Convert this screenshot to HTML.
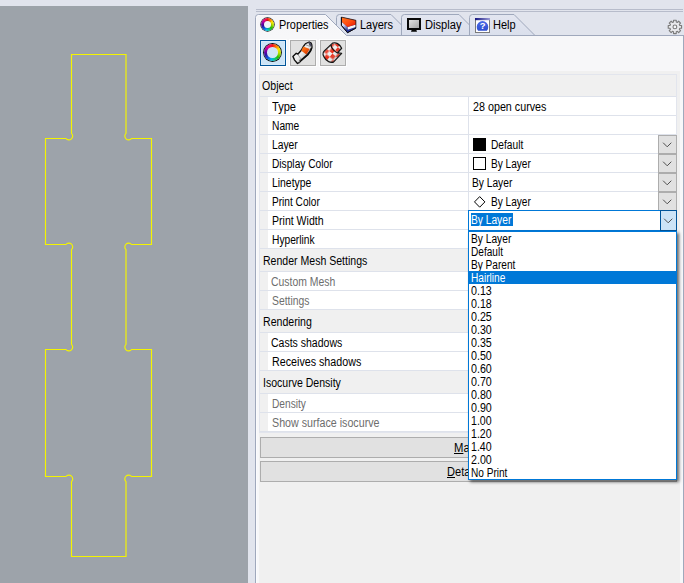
<!DOCTYPE html>
<html lang="en">
<head>
<meta charset="utf-8">
<title>Properties</title>
<style>
html,body{margin:0;padding:0}
body{width:684px;height:583px;overflow:hidden;position:relative;background:#E1E4ED;font-family:'Liberation Sans', sans-serif;font-size:11px}
.abs,.t,.hd,.rw,.ln,.hl,.sw,.cb,.btn{position:absolute}
.t{white-space:nowrap;transform-origin:0 0;display:block}
#view{left:0;top:6px;width:248px;height:577px;background:#9DA3AA}
#content{left:256px;top:36px;width:427px;height:547px;background:#F7F7F9}
#lborder{left:255px;top:36px;width:1px;height:547px;background:#9FA8BC}
#lwhite{left:256px;top:36px;width:1px;height:547px;background:#fbfbfd}
#rborder{left:683px;top:36px;width:1px;height:547px;background:#9FA8BC}
#inner{left:259px;top:71px;width:421px;height:512px;background:#F0F0F0}
#grid{left:259px;top:74px;width:416px;height:357px;border:1px solid #E2E5ED;background:#F0F0F0}
.hd{left:260px;width:416px;background:#F0F0F0}
.rw{left:268px;width:408px;background:#fff}
.ln{left:260px;width:416px;height:1px;background:#DEE2EB}
#vdiv{left:468px;width:1px;background:#DEE2EB}
.tb{position:absolute;top:40px;width:24px;height:24px;border:1px solid #ADADAD;background:#E1E1E1;box-shadow:0 0 0 1px rgba(255,255,255,.75)}
.tb.on{border-color:#005499;background:#CCE4F7;box-shadow:0 0 0 1px rgba(255,255,255,.75),inset 0 0 0 1px rgba(255,255,255,.2)}
.cb{left:658px;width:17px;height:17px;border:1px solid #ADADAD;background:#E1E1E1}
.btn{left:260px;width:415px;height:19px;border:1px solid #ADADAD;background:#E1E1E1}
#dd{left:468px;top:231px;width:207px;height:247px;border:1px solid #0078D7;background:#fff;box-shadow:2px 2px 3px rgba(0,0,0,.58)}
.hl{left:469px;width:207px;height:13px;background:#0078D7}
#combo{left:468px;top:210px;width:207px;height:19px;border:1px solid #0078D7;background:#fff}
#combobtn{left:660px;top:210px;width:15px;height:19px;border:1px solid #005499;background:#CCE4F7}
#sel{left:471px;top:213px;width:42px;height:13px;background:#0078D7}
u{text-decoration:underline}
</style>
</head>
<body>

<!-- viewport -->
<div id="view" class="abs"></div>
<svg class="abs" style="left:0;top:0" width="248" height="583" viewBox="0 0 248 583">
  <path d="M126.0,54.5 L71.5,54.5 L71.50,133.33 A3.8,3.8 0 1 1 65.95,138.50 L45.5,138.5 L45.5,244.5 L65.95,244.50 A3.8,3.8 0 1 1 71.50,249.67 L71.50,344.33 A3.8,3.8 0 1 1 65.95,349.50 L45.5,349.5 L45.5,476.5 L65.95,476.50 A3.8,3.8 0 1 1 71.50,481.67 L71.5,556.5 L126.0,556.5 L126.00,481.67 A3.8,3.8 0 1 1 131.55,476.50 L151.5,476.5 L151.5,349.5 L131.55,349.50 A3.8,3.8 0 1 1 126.00,344.33 L126.00,249.67 A3.8,3.8 0 1 1 131.55,244.50 L151.5,244.5 L151.5,138.5 L131.55,138.50 A3.8,3.8 0 1 1 126.00,133.33 Z" fill="none" stroke="#F4F400" stroke-width="1.15"/>
</svg>

<!-- panel chrome -->
<div class="abs" style="left:256px;top:9px;width:427px;height:1px;background:#B7BCCB"></div>
<div class="abs" style="left:256px;top:11px;width:427px;height:1px;background:#B7BCCB"></div>
<div id="content" class="abs"></div>
<div id="lborder" class="abs"></div><div id="lwhite" class="abs"></div><div id="rborder" class="abs"></div>

<svg class="abs" style="left:0;top:0" width="684" height="40" viewBox="0 0 684 40">
  <defs>
    <linearGradient id="gi" x1="0" y1="0" x2="0" y2="1"><stop offset="0" stop-color="#E3E6F0"/><stop offset="1" stop-color="#DADFEC"/></linearGradient>
    <linearGradient id="ga" x1="0" y1="0" x2="0" y2="1"><stop offset="0" stop-color="#F5F5F8"/><stop offset="1" stop-color="#F7F7F9"/></linearGradient>
  </defs>
  <path d="M336.5,36.0 L336.5,17.5 Q336.5,14.5 339.5,14.5 L391,14.5 L412.0,35.5" fill="url(#gi)" stroke="#9FA8BC"/>
  <path d="M401.5,36.0 L401.5,17.5 Q401.5,14.5 404.5,14.5 L459,14.5 L480.0,35.5" fill="url(#gi)" stroke="#9FA8BC"/>
  <path d="M469.5,36.0 L469.5,17.5 Q469.5,14.5 472.5,14.5 L514,14.5 L535.0,35.5" fill="url(#gi)" stroke="#9FA8BC"/>
  <path d="M256,35.5 L684,35.5" stroke="#9FA8BC"/>
  <path d="M255.5,36.0 L255.5,17.5 Q255.5,14.5 258.5,14.5 L325.5,14.5 L346.5,35.5 L346.5,36.0" fill="url(#ga)" stroke="none"/>
  <path d="M255.5,36.0 L255.5,17.5 Q255.5,14.5 258.5,14.5 L325.5,14.5 L346.5,35.5" fill="none" stroke="#9FA8BC"/>
  <path d="M256.5,36 L256.5,17.5 Q256.5,15.5 258.5,15.5 L325,15.5 L345,35.5" fill="none" stroke="#fff" stroke-opacity=".45"/>
</svg>

<!-- tab icons -->
<div class="abs" style="left:261px;top:17.9px;width:13.2px;height:13.2px;border-radius:50%;background:conic-gradient(from 0deg,#f01818 0deg,#ff7000 28deg,#ffe800 62deg,#b4e000 95deg,#28c000 130deg,#00c890 165deg,#00b8e8 190deg,#1050e0 222deg,#3010a0 252deg,#8000a8 282deg,#e80090 320deg,#f01040 345deg,#f01818 360deg);box-shadow:0 0 0 .7px #1a1a1a"></div>
<div class="abs" style="left:264.1px;top:21px;width:7px;height:7px;border-radius:50%;background:radial-gradient(#f2f3f8 55%,#fff 100%);box-shadow:0 0 0 .4px rgba(0,0,0,.35)"></div>
<span class="t" style="left:278.84px;top:18.00px;font-size:12px;line-height:14px;color:#000;transform:scaleX(0.9062)">Properties</span>

<svg class="abs" style="left:340px;top:16px" width="17" height="18" viewBox="339.7 16 17 18">
  <defs>
    <linearGradient id="lo" x1="0" y1="0" x2="1" y2="1"><stop offset="0" stop-color="#FF7A1E"/><stop offset=".55" stop-color="#FF4A10"/><stop offset="1" stop-color="#DE1408"/></linearGradient>
    <linearGradient id="lf" x1="0" y1="0" x2="0.35" y2="1"><stop offset="0" stop-color="#FFFFFF"/><stop offset=".45" stop-color="#C9CFF0"/><stop offset="1" stop-color="#1E2C8E"/></linearGradient>
  </defs>
  <polygon points="341.1,17.1 355.6,20.3 355.6,28.1 347.2,32.7 341.1,25.4" fill="#24349A"/>
  <polygon points="347.2,26.9 355.6,24.4 355.6,26.9 347.2,29.7" fill="#F4F4F6"/>
  <polygon points="341.1,21.4 347.2,26.9 347.2,32.7 341.1,25.4" fill="url(#lf)"/>
  <polygon points="341.1,17.1 355.6,20.3 355.6,24.6 347.2,26.9 341.1,21.4" fill="url(#lo)"/>
  <polygon points="341.1,17.1 355.6,20.3 355.6,28.1 347.2,32.7 341.1,25.4" fill="none" stroke="#111" stroke-width=".7" stroke-linejoin="round"/>
  <path d="M341.1,17.1 L341.1,25.4 L347.2,32.7 L355.6,28.1" fill="none" stroke="#0a0a14" stroke-width="1" stroke-linejoin="round"/>
</svg>
<span class="t" style="left:359.58px;top:18.00px;font-size:12px;line-height:14px;color:#000;transform:scaleX(0.9170)">Layers</span>

<svg class="abs" style="left:406px;top:17px" width="17" height="16" viewBox="406 17 17 16">
  <defs><linearGradient id="scr" x1="0" y1="0" x2="1" y2="1"><stop offset="0" stop-color="#E4E4E4"/><stop offset="1" stop-color="#A8A8A8"/></linearGradient></defs>
  <rect x="407" y="18" width="14" height="12" fill="#0a0a0a"/>
  <rect x="409" y="20" width="10" height="8" fill="url(#scr)"/>
  <polygon points="411.6,30 416.4,30 417,31.7 411,31.7" fill="#0a0a0a"/>
</svg>
<span class="t" style="left:424.82px;top:18.00px;font-size:12px;line-height:14px;color:#000;transform:scaleX(0.9282)">Display</span>

<svg class="abs" style="left:474px;top:17px" width="17" height="17" viewBox="474 17 17 17">
  <defs><linearGradient id="hq" x1="0" y1="0" x2="0" y2="1"><stop offset="0" stop-color="#4A6AE6"/><stop offset="1" stop-color="#2F4FD0"/></linearGradient><linearGradient id="hb" x1="0" y1="0" x2="1" y2="0"><stop offset="0" stop-color="#14147E"/><stop offset="1" stop-color="#9C9CD6"/></linearGradient></defs>
  <rect x="475.5" y="18.5" width="14" height="14" fill="#fff" stroke="#7A7A7A"/>
  <rect x="475" y="18" width="15" height="2.2" fill="url(#hb)"/>
  <path d="M478.1,30.7 A5.8,5.8 0 1 1 486.9,30.7 Z" fill="url(#hq)"/>
  <text x="482.6" y="29.4" font-family="'Liberation Sans',sans-serif" font-weight="bold" font-size="9.5" fill="#fff" text-anchor="middle">?</text>
</svg>
<span class="t" style="left:492.83px;top:18.00px;font-size:12px;line-height:14px;color:#000;transform:scaleX(0.9190)">Help</span>

<svg class="abs" style="left:666px;top:18px" width="18" height="18" viewBox="666 18 18 18">
  <path d="M673.54,21.98 L673.55,20.24 L676.25,20.24 L676.26,21.98 L677.41,22.46 L678.66,21.23 L680.57,23.14 L679.34,24.39 L679.82,25.54 L681.56,25.55 L681.56,28.25 L679.82,28.26 L679.34,29.41 L680.57,30.66 L678.66,32.57 L677.41,31.34 L676.26,31.82 L676.25,33.56 L673.55,33.56 L673.54,31.82 L672.39,31.34 L671.14,32.57 L669.23,30.66 L670.46,29.41 L669.98,28.26 L668.24,28.25 L668.24,25.55 L669.98,25.54 L670.46,24.39 L669.23,23.14 L671.14,21.23 L672.39,22.46Z" fill="#E9E9EC" stroke="#7c7c7c" stroke-width="1.15" stroke-linejoin="round"/>
  <circle cx="674.9" cy="26.9" r="1.9" fill="#F6F6F8" stroke="#7c7c7c" stroke-width="1.1"/>
</svg>

<!-- toolbar -->
<div class="tb on" style="left:260px"></div>
<div class="abs" style="left:263.7px;top:43.7px;width:17.6px;height:17.6px;border-radius:50%;background:conic-gradient(from 0deg,#f01818 0deg,#ff7000 28deg,#ffe800 62deg,#b4e000 95deg,#28c000 130deg,#00c890 165deg,#00b8e8 190deg,#1050e0 222deg,#3010a0 252deg,#8000a8 282deg,#e80090 320deg,#f01040 345deg,#f01818 360deg);box-shadow:0 0 0 .9px #0c0c0c"></div>
<div class="abs" style="left:267.2px;top:47.2px;width:10.6px;height:10.6px;border-radius:50%;background:radial-gradient(#cfe5f7 60%,#f4f9fd 100%)"></div>

<div class="tb" style="left:290px"></div>
<svg class="abs" style="left:290px;top:40px" width="26" height="26" viewBox="0 0 26 26">
  <defs>
    <linearGradient id="tb1" x1="0" y1="0" x2="1" y2="1"><stop offset="0" stop-color="#fff"/><stop offset=".5" stop-color="#ececec"/><stop offset="1" stop-color="#8a8a8a"/></linearGradient>
    <linearGradient id="tb2" x1="0" y1="0" x2="1" y2="1"><stop offset="0" stop-color="#FF8A22"/><stop offset=".5" stop-color="#F25A0C"/><stop offset="1" stop-color="#C02600"/></linearGradient>
  </defs>
  <path d="M2.9,16.4 L6.2,13.2 L7.8,14.3 L11.3,10.3 L13.3,6.6 L14.9,4.4 L15.8,3.5 L19.2,2.0 L20.9,2.8 L21.7,4.6 L22.0,7.2 L20.7,10.9 L17.6,15.0 L13.5,18.6 L10.4,21.2 L9.1,22.7 L7.5,23.5 L4.6,20.1 Z" fill="url(#tb1)" stroke="#0c0c0c" stroke-width="1.35" stroke-linejoin="round"/>
  <polygon points="13.3,6.5 19.7,9.1 16.4,14.6 11.3,10.7" fill="url(#tb2)"/>
  <path d="M21.4,8.4 L20.2,11 L17.2,14.9 L13.2,18.4 L10,21" fill="none" stroke="#0c0c0c" stroke-width="1.7" stroke-linecap="round" stroke-linejoin="round" opacity=".85"/>
  <path d="M7.8,14.3 L10.5,18.3 L9.1,22.7" fill="none" stroke="#8c8c8c" stroke-width=".8"/>
  <path d="M14.9,4.4 L21.9,7.2" fill="none" stroke="#777" stroke-width=".7"/>
  <polygon points="18.2,2.6 19.3,2.1 20.8,2.9 21.5,4.6 21.6,6.4 19.4,5.6" fill="#4a4a5e"/>
</svg>

<div class="tb" style="left:320px"></div>
<svg class="abs" style="left:320px;top:40px" width="26" height="26" viewBox="0 0 26 26">
  <defs>
    <pattern id="chk" width="8.4" height="8.4" patternUnits="userSpaceOnUse" patternTransform="rotate(40) translate(1.5,2.45)">
      <rect width="8.4" height="8.4" fill="#EDEDED"/>
      <rect width="4.2" height="4.2" fill="#E8301C"/><rect x="4.2" y="4.2" width="4.2" height="4.2" fill="#E8301C"/>
    </pattern>
    <linearGradient id="shd" x1="0" y1="0" x2="1" y2="1"><stop offset="0" stop-color="#fff" stop-opacity=".45"/><stop offset=".5" stop-color="#fff" stop-opacity="0"/><stop offset="1" stop-color="#000" stop-opacity=".5"/></linearGradient>
  </defs>
  <path id="txo" d="M12.9,3.1 Q15.5,2.6 17.5,3.6 Q20.6,5.4 21.6,8.2 L17.5,12.9 L21.6,13.4 L13.4,22.1 Q10.8,22.6 8.7,21.6 Q5.4,20 4.1,17 Q2.7,14.4 3.1,13.4 Q3.3,12.3 4.6,10.8 Z" fill="url(#chk)" stroke="#0c0c0c" stroke-width="1.3" stroke-linejoin="round"/>
  <path d="M12.9,3.1 Q15.5,2.6 17.5,3.6 Q20.6,5.4 21.6,8.2 L17.5,12.9 L21.6,13.4 L13.4,22.1 Q10.8,22.6 8.7,21.6 Q5.4,20 4.1,17 Q2.7,14.4 3.1,13.4 Q3.3,12.3 4.6,10.8 Z" fill="url(#shd)"/>
  <path d="M11,4.9 Q11.2,8 13.4,9.8 Q15.2,11.6 17.5,12.9" fill="none" stroke="#111" stroke-width="1.1"/>
</svg>

<!-- property grid -->
<div id="inner" class="abs"></div>
<div id="grid" class="abs"></div>
<div class="hd" style="top:75px;height:21px"></div>
<div class="ln" style="top:96px"></div>
<span class="t" style="left:262.45px;top:79.00px;font-size:12px;line-height:14px;color:#000;transform:scaleX(0.8824)">Object</span>
<div class="rw" style="top:97px;height:18px"></div>
<div class="ln" style="top:115px"></div>
<span class="t" style="left:271.77px;top:100.00px;font-size:12px;line-height:14px;color:#000;transform:scaleX(0.9208)">Type</span>
<div class="rw" style="top:116px;height:18px"></div>
<div class="ln" style="top:134px"></div>
<span class="t" style="left:272.14px;top:119.00px;font-size:12px;line-height:14px;color:#000;transform:scaleX(0.8525)">Name</span>
<div class="rw" style="top:135px;height:18px"></div>
<div class="ln" style="top:153px"></div>
<span class="t" style="left:272.14px;top:138.00px;font-size:12px;line-height:14px;color:#000;transform:scaleX(0.8572)">Layer</span>
<div class="rw" style="top:154px;height:18px"></div>
<div class="ln" style="top:172px"></div>
<span class="t" style="left:272.15px;top:157.00px;font-size:12px;line-height:14px;color:#000;transform:scaleX(0.8485)">Display Color</span>
<div class="rw" style="top:173px;height:18px"></div>
<div class="ln" style="top:191px"></div>
<span class="t" style="left:272.13px;top:176.00px;font-size:12px;line-height:14px;color:#000;transform:scaleX(0.8662)">Linetype</span>
<div class="rw" style="top:192px;height:18px"></div>
<div class="ln" style="top:210px"></div>
<span class="t" style="left:272.16px;top:195.00px;font-size:12px;line-height:14px;color:#000;transform:scaleX(0.8424)">Print Color</span>
<div class="rw" style="top:211px;height:18px"></div>
<div class="ln" style="top:229px"></div>
<span class="t" style="left:272.12px;top:214.00px;font-size:12px;line-height:14px;color:#000;transform:scaleX(0.8792)">Print Width</span>
<div class="rw" style="top:230px;height:18px"></div>
<div class="ln" style="top:248px"></div>
<span class="t" style="left:272.15px;top:233.00px;font-size:12px;line-height:14px;color:#000;transform:scaleX(0.8521)">Hyperlink</span>
<div class="hd" style="top:250px;height:21px"></div>
<div class="ln" style="top:271px"></div>
<span class="t" style="left:262.87px;top:254.00px;font-size:12px;line-height:14px;color:#000;transform:scaleX(0.8785)">Render Mesh Settings</span>
<div class="rw" style="top:272px;height:18px"></div>
<div class="ln" style="top:290px"></div>
<span class="t" style="left:271.46px;top:275.00px;font-size:12px;line-height:14px;color:#6D6D6D;transform:scaleX(0.8675)">Custom Mesh</span>
<div class="rw" style="top:291px;height:18px"></div>
<div class="ln" style="top:309px"></div>
<span class="t" style="left:271.96px;top:294.00px;font-size:12px;line-height:14px;color:#6D6D6D;transform:scaleX(0.8639)">Settings</span>
<div class="hd" style="top:311px;height:21px"></div>
<div class="ln" style="top:332px"></div>
<span class="t" style="left:262.87px;top:315.00px;font-size:12px;line-height:14px;color:#000;transform:scaleX(0.8812)">Rendering</span>
<div class="rw" style="top:333px;height:18px"></div>
<div class="ln" style="top:351px"></div>
<span class="t" style="left:271.45px;top:336.00px;font-size:12px;line-height:14px;color:#000;transform:scaleX(0.8754)">Casts shadows</span>
<div class="rw" style="top:352px;height:18px"></div>
<div class="ln" style="top:370px"></div>
<span class="t" style="left:272.11px;top:355.00px;font-size:12px;line-height:14px;color:#000;transform:scaleX(0.8923)">Receives shadows</span>
<div class="hd" style="top:372px;height:21px"></div>
<div class="ln" style="top:393px"></div>
<span class="t" style="left:263.18px;top:376.00px;font-size:12px;line-height:14px;color:#000;transform:scaleX(0.8781)">Isocurve Density</span>
<div class="rw" style="top:394px;height:18px"></div>
<div class="ln" style="top:412px"></div>
<span class="t" style="left:272.15px;top:397.00px;font-size:12px;line-height:14px;color:#6D6D6D;transform:scaleX(0.8489)">Density</span>
<div class="rw" style="top:413px;height:18px"></div>
<div class="ln" style="top:431px"></div>
<span class="t" style="left:271.94px;top:416.00px;font-size:12px;line-height:14px;color:#6D6D6D;transform:scaleX(0.8903)">Show surface isocurve</span>
<div id="vdiv" class="abs" style="top:97px;height:152px"></div>
<div id="vdiv2" class="abs" style="left:468px;width:1px;background:#DEE2EB;top:272px;height:38px"></div>
<div class="abs" style="left:468px;width:1px;background:#DEE2EB;top:333px;height:38px"></div>
<div class="abs" style="left:468px;width:1px;background:#DEE2EB;top:394px;height:38px"></div>

<!-- values -->
<div class="sw" style="left:473px;top:138px;width:13px;height:13px;background:#000"></div>
<div class="sw" style="left:473px;top:157px;width:11px;height:11px;border:1px solid #000;background:#fff"></div>
<svg class="abs" style="left:472px;top:194px" width="16" height="16" viewBox="472 194 16 16"><polygon points="479.7,196.6 484.9,201.9 479.7,207.2 474.5,201.9" fill="#fff" stroke="#000" stroke-width="1"/></svg>
<span class="t" style="left:472.94px;top:100.00px;font-size:12px;line-height:14px;color:#000;transform:scaleX(0.8951)">28 open curves</span>
<span class="t" style="left:490.65px;top:138.00px;font-size:12px;line-height:14px;color:#000;transform:scaleX(0.8475)">Default</span>
<span class="t" style="left:490.66px;top:157.00px;font-size:12px;line-height:14px;color:#000;transform:scaleX(0.8402)">By Layer</span>
<span class="t" style="left:472.40px;top:176.00px;font-size:12px;line-height:14px;color:#000;transform:scaleX(0.8510)">By Layer</span>
<span class="t" style="left:490.66px;top:195.00px;font-size:12px;line-height:14px;color:#000;transform:scaleX(0.8402)">By Layer</span>
<div class="cb" style="top:135px"></div><div class="cb" style="top:154px"></div><div class="cb" style="top:173px"></div><div class="cb" style="top:192px"></div>
<svg class="abs" style="left:658px;top:135px" width="19" height="96" viewBox="658 135 19 96" fill="none" stroke="#505050" stroke-width="1">
  <path d="M663.1,142.7 L667.2,146.8 L671.3,142.7"/>
  <path d="M663.1,161.7 L667.2,165.8 L671.3,161.7"/>
  <path d="M663.1,180.7 L667.2,184.8 L671.3,180.7"/>
  <path d="M663.1,199.7 L667.2,203.8 L671.3,199.7"/>
</svg>

<!-- buttons -->
<div class="btn" style="top:437px"></div>
<div class="btn" style="top:461px"></div>
<span class="t" style="left:453.51px;top:441.00px;font-size:12px;line-height:14px;color:#000;transform:scaleX(0.9410)"><u>M</u>atch</span>
<span class="t" style="left:447.43px;top:465.00px;font-size:12px;line-height:14px;color:#000;transform:scaleX(0.9222)"><u>D</u>etails...</span>

<!-- active combo + dropdown -->
<div id="combo" class="abs"></div>
<div id="combobtn" class="abs"></div>
<svg class="abs" style="left:660px;top:210px" width="17" height="21" viewBox="660 210 17 21" fill="none" stroke="#505050" stroke-width="1"><path d="M664.1,218.7 L668.2,222.8 L672.3,218.7"/></svg>
<div id="sel" class="abs"></div>
<span class="t" style="left:471.40px;top:213.00px;font-size:12px;line-height:14px;color:#fff;transform:scaleX(0.8510)">By Layer</span>
<div id="dd" class="abs"></div>
<span class="t" style="left:471.40px;top:232.00px;font-size:12px;line-height:14px;color:#000;transform:scaleX(0.8510)">By Layer</span>
<span class="t" style="left:471.41px;top:245.00px;font-size:12px;line-height:14px;color:#000;transform:scaleX(0.8407)">Default</span>
<span class="t" style="left:471.40px;top:258.00px;font-size:12px;line-height:14px;color:#000;transform:scaleX(0.8427)">By Parent</span>
<div class="hl" style="top:271px"></div>
<span class="t" style="left:471.40px;top:271.00px;font-size:12px;line-height:14px;color:#fff;transform:scaleX(0.8435)">Hairline</span>
<span class="t" style="left:471.14px;top:284.00px;font-size:12px;line-height:14px;color:#000;transform:scaleX(0.8902)">0.13</span>
<span class="t" style="left:471.14px;top:297.00px;font-size:12px;line-height:14px;color:#000;transform:scaleX(0.8902)">0.18</span>
<span class="t" style="left:471.14px;top:310.00px;font-size:12px;line-height:14px;color:#000;transform:scaleX(0.8902)">0.25</span>
<span class="t" style="left:471.14px;top:323.00px;font-size:12px;line-height:14px;color:#000;transform:scaleX(0.8902)">0.30</span>
<span class="t" style="left:471.14px;top:336.00px;font-size:12px;line-height:14px;color:#000;transform:scaleX(0.8902)">0.35</span>
<span class="t" style="left:471.14px;top:349.00px;font-size:12px;line-height:14px;color:#000;transform:scaleX(0.8902)">0.50</span>
<span class="t" style="left:471.14px;top:362.00px;font-size:12px;line-height:14px;color:#000;transform:scaleX(0.8902)">0.60</span>
<span class="t" style="left:471.14px;top:375.00px;font-size:12px;line-height:14px;color:#000;transform:scaleX(0.8902)">0.70</span>
<span class="t" style="left:471.14px;top:388.00px;font-size:12px;line-height:14px;color:#000;transform:scaleX(0.8902)">0.80</span>
<span class="t" style="left:471.14px;top:401.00px;font-size:12px;line-height:14px;color:#000;transform:scaleX(0.8902)">0.90</span>
<span class="t" style="left:471.31px;top:414.00px;font-size:12px;line-height:14px;color:#000;transform:scaleX(0.8827)">1.00</span>
<span class="t" style="left:471.31px;top:427.00px;font-size:12px;line-height:14px;color:#000;transform:scaleX(0.8827)">1.20</span>
<span class="t" style="left:471.31px;top:440.00px;font-size:12px;line-height:14px;color:#000;transform:scaleX(0.8827)">1.40</span>
<span class="t" style="left:471.19px;top:453.00px;font-size:12px;line-height:14px;color:#000;transform:scaleX(0.8877)">2.00</span>
<span class="t" style="left:471.41px;top:466.00px;font-size:12px;line-height:14px;color:#000;transform:scaleX(0.8403)">No Print</span>

</body>
</html>
